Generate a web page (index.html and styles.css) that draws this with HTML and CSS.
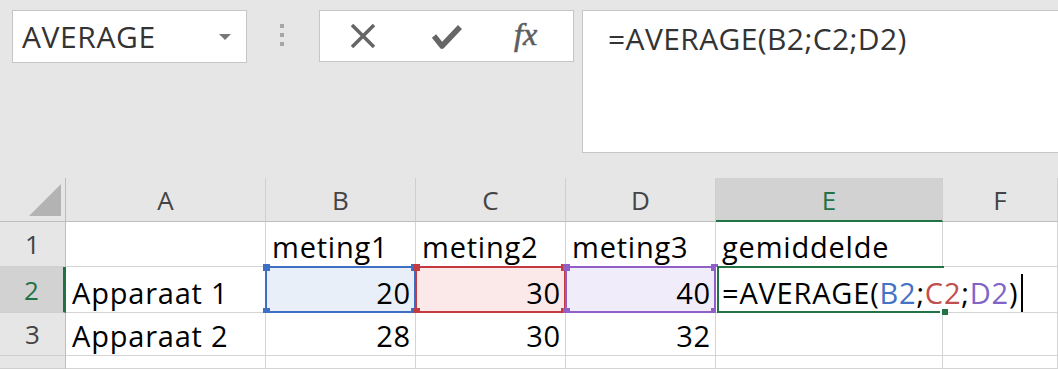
FILE: index.html
```html
<!DOCTYPE html>
<html lang="nl">
<head>
  <meta charset="UTF-8" />
  <title>AVERAGE</title>
  <link rel="stylesheet" href="styles.css">
</head>
<body>
  <div class="toolbar">
    <div class="name-box">
      <span class="name">AVERAGE</span>
      <span class="arrow"></span>
    </div>
    <div class="dots"><i></i><i></i><i></i></div>
    <div class="icon-box">
      <svg class="icon" width="30" height="30" viewBox="0 0 30 30">
        <path d="M4 4 L26 26 M26 4 L4 26" stroke="#666" stroke-width="3.5" fill="none" />
      </svg>
      <svg class="icon" width="34" height="30" viewBox="0 0 34 30">
        <path d="M4 15 L12 25 L30 6" stroke="#666" stroke-width="5.5" fill="none" stroke-linejoin="round" />
      </svg>
      <span class="fx">fx</span>
    </div>
    <div class="formula-box">=AVERAGE(B2;C2;D2)</div>
  </div>

  <div class="sheet">
    <!-- kolomkoppen -->
    <div class="corner"><span class="tri"></span></div>
    <div class="col-head">A</div>
    <div class="col-head">B</div>
    <div class="col-head">C</div>
    <div class="col-head">D</div>
    <div class="col-head active">E</div>
    <div class="col-head">F</div>

    <!-- rij 1 -->
    <div class="row-head">1</div>
    <div class="cell"></div>
    <div class="cell">meting1</div>
    <div class="cell">meting2</div>
    <div class="cell">meting3</div>
    <div class="cell">gemiddelde</div>
    <div class="cell"></div>

    <!-- rij 2 -->
    <div class="row-head active">2</div>
    <div class="cell">Apparaat 1</div>
    <div class="cell num ref blue">20<span class="range"><b class="h tl"></b><b class="h tr"></b><b class="h bl"></b><b class="h br"></b></span></div>
    <div class="cell num ref red">30<span class="range"><b class="h tl"></b><b class="h tr"></b><b class="h bl"></b><b class="h br"></b></span></div>
    <div class="cell num ref purple">40<span class="range"><b class="h tl"></b><b class="h tr"></b><b class="h bl"></b><b class="h br"></b></span></div>
    <div class="cell editing">
      <span class="entry">=AVERAGE(<span class="c-blue">B2</span>;<span class="c-red">C2</span>;<span class="c-purple">D2</span>)<span class="caret"></span></span>
      <span class="edit-frame"><b class="fill"></b></span>
    </div>
    <div class="cell spill"></div>

    <!-- rij 3 -->
    <div class="row-head">3</div>
    <div class="cell">Apparaat 2</div>
    <div class="cell num">28</div>
    <div class="cell num">30</div>
    <div class="cell num">32</div>
    <div class="cell"></div>
    <div class="cell"></div>

    <!-- rij 4 -->
    <div class="row-head"></div>
    <div class="cell"></div>
    <div class="cell"></div>
    <div class="cell"></div>
    <div class="cell"></div>
    <div class="cell"></div>
    <div class="cell"></div>
  </div>
</body>
</html>
```

FILE: styles.css
```css
* {
  margin: 0;
  padding: 0;
  box-sizing: border-box;
}
body {
  background: #e6e6e6;
  font-family: "Open Sans", sans-serif;
  width: 1058px;
  height: 369px;
  overflow: hidden;
}

/* Formulebalk */
.toolbar {
  display: flex;
  align-items: flex-start;
  height: 178px;
  padding: 10px 0 0 12px;
}
.name-box {
  display: flex;
  align-items: center;
  justify-content: space-between;
  width: 235px;
  height: 53px;
  background: #fff;
  border: 1px solid #c6c6c6;
  padding: 0 15px 0 9px;
}
.name {
  font-size: 30px;
  color: #333;
  letter-spacing: 0.6px;
}
.arrow {
  width: 0;
  height: 0;
  border-left: 6px solid transparent;
  border-right: 6px solid transparent;
  border-top: 6px solid #777;
}
.dots {
  display: flex;
  flex-direction: column;
  gap: 5px;
  margin: 14px 0 0 33px;
}
.dots i {
  display: block;
  width: 4px;
  height: 4px;
  background: #a6a6a6;
}
.icon-box {
  display: flex;
  align-items: center;
  width: 255px;
  height: 52px;
  margin-left: 35px;
  background: #fff;
  border: 1px solid #c6c6c6;
  padding-left: 28px;
  gap: 54px;
}
.icon-box .icon:nth-child(2) {
  margin-left: -2px;
}
.fx {
  font-family: "Liberation Serif", serif;
  font-style: italic;
  font-size: 32px;
  color: #5e5e5e;
  margin-left: -4px;
  margin-top: -4px;
  -webkit-text-stroke: 0.6px #5e5e5e;
}
.formula-box {
  flex: 1;
  height: 143px;
  margin-left: 8px;
  background: #fff;
  border: 1px solid #c6c6c6;
  border-right: none;
  padding: 7px 0 0 25px;
  font-size: 30px;
  letter-spacing: 0.4px;
  color: #333;
}

/* Werkblad */
.sheet {
  display: grid;
  grid-template-columns: 66px 200px 150px 150px 150px 227px 1fr;
  grid-template-rows: 44px 45px 46px 43px 1fr;
  height: 191px;
}
.corner {
  position: relative;
  border-right: 1px solid #bdbdbd;
  border-bottom: 1px solid #bdbdbd;
}
.tri {
  position: absolute;
  right: 4px;
  bottom: 5px;
  width: 0;
  height: 0;
  border-left: 32px solid transparent;
  border-bottom: 32px solid #b3b3b3;
}
.col-head {
  display: flex;
  align-items: center;
  justify-content: center;
  border-right: 1px solid #cfcfcf;
  border-bottom: 1px solid #bdbdbd;
  font-size: 26px;
  color: #444;
  padding-top: 1px;
}
.col-head.active {
  background: #d2d2d2;
  color: #217346;
  border-bottom: 2px solid #217346;
}
.row-head {
  display: flex;
  align-items: center;
  justify-content: center;
  border-right: 1px solid #bdbdbd;
  border-bottom: 1px solid #cfcfcf;
  font-size: 26px;
  color: #444;
}
.row-head.active {
  background: #d2d2d2;
  color: #217346;
  border-right: 3px solid #217346;
}
.cell {
  position: relative;
  display: flex;
  align-items: flex-end;
  background: #fff;
  border-right: 1px solid #d4d4d4;
  border-bottom: 1px solid #d4d4d4;
  font-size: 29px;
  letter-spacing: 0.8px;
  line-height: 36px;
  padding: 0 4px 1px 6px;
  color: #000;
  white-space: nowrap;
}
.num {
  justify-content: flex-end;
}

/* Verwijzingen in de formule */
.range {
  position: absolute;
  top: -1px;
  left: -1px;
  right: -1px;
  bottom: -1px;
  border: 2px solid;
}
.h {
  position: absolute;
  width: 7px;
  height: 7px;
  background: currentColor;
}
.tl { top: -4px; left: -4px; }
.tr { top: -4px; right: -4px; }
.bl { bottom: -4px; left: -4px; }
.br { bottom: -4px; right: -4px; }
.blue { background: #e9eff9; }
.blue .range { color: #3f6fc4; border-color: #3f6fc4; }
.red { background: #fbe8e8; }
.red .range { color: #c43b3f; border-color: #c43b3f; }
.purple { background: #f1ecf9; }
.purple .range { color: #8f60c8; border-color: #8f60c8; }
.ref {
  color: #000;
}

/* Actieve cel in bewerkmodus */
.editing {
  border-right: none;
  z-index: 1;
  overflow: visible;
}
.entry {
  flex-shrink: 0;
}
.edit-frame {
  position: absolute;
  top: -1px;
  left: 1px;
  width: 227px;
  bottom: -1px;
  border-top: 2px solid #217346;
  border-left: 2px solid #217346;
  border-bottom: 2px solid #217346;
  pointer-events: none;
}
.fill {
  position: absolute;
  right: -4px;
  bottom: -4px;
  width: 8px;
  height: 6px;
  background: #217346;
  border-left: 2px solid #fff;
}
.c-blue { color: #4472c4; }
.c-red { color: #c0504d; }
.c-purple { color: #8064c8; }
.caret {
  display: inline-block;
  width: 2px;
  height: 38px;
  background: #000;
  margin: 0 0 -8px 3px;
}
```
